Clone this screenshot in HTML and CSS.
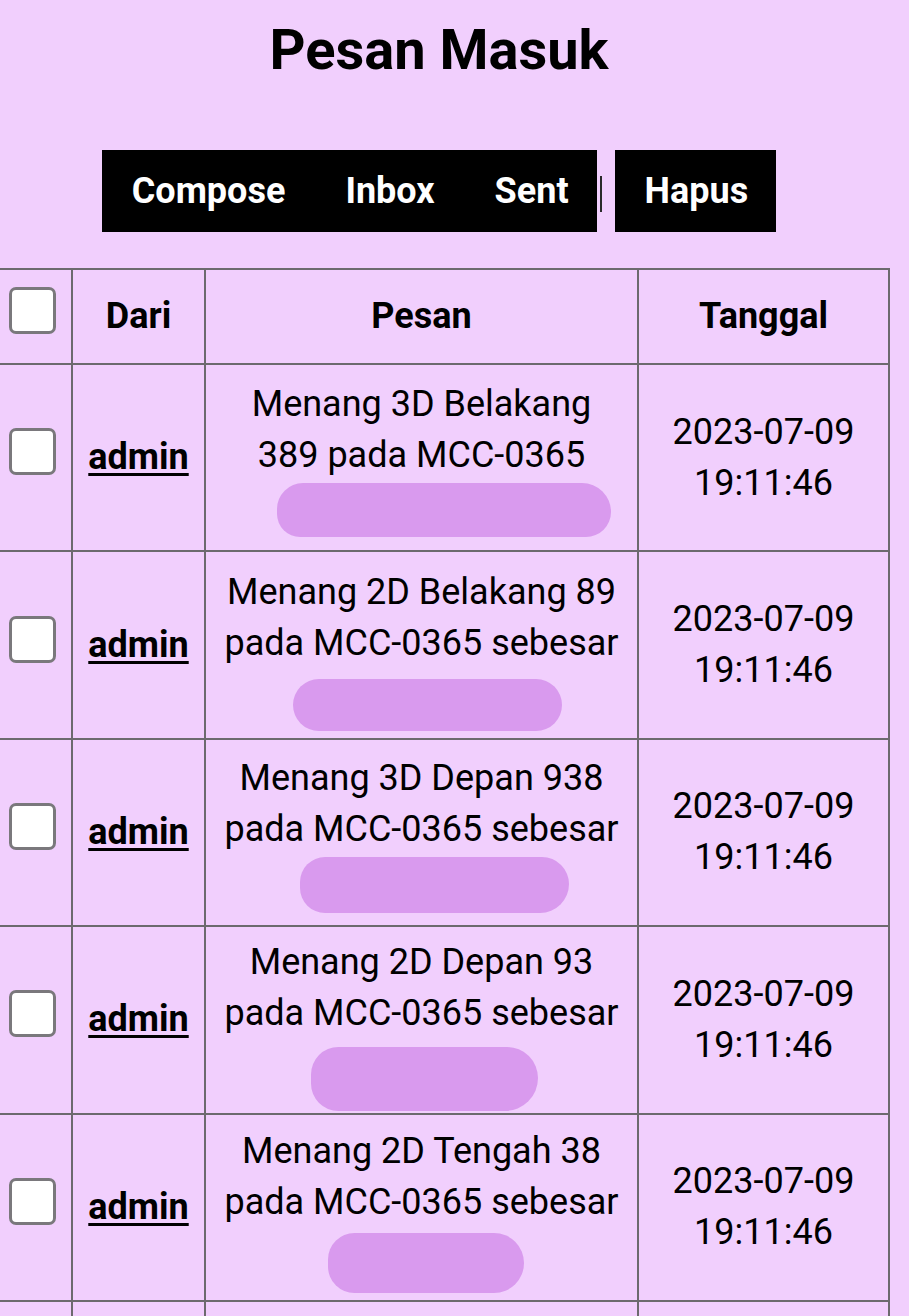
FILE: index.html
```html
<!DOCTYPE html>
<html lang="id">
<head>
<meta charset="utf-8">
<title>Pesan Masuk</title>
<link rel="stylesheet" href="styles.css">
</head>
<body>
<div class="page">
  <h1 class="title">Pesan Masuk</h1>
  <nav class="nav">
    <div class="nav-box">
      <a class="nav-link" href="#">Compose</a>
      <a class="nav-link" href="#">Inbox</a>
      <a class="nav-link" href="#">Sent</a>
    </div>
    <span class="nav-sep"></span>
    <div class="nav-box">
      <a class="nav-link" href="#">Hapus</a>
    </div>
  </nav>
</div>
<table class="inbox">
  <colgroup>
    <col class="c-check"><col class="c-from"><col class="c-msg"><col class="c-date">
  </colgroup>
  <thead>
    <tr>
      <th><span class="check"></span></th>
      <th>Dari</th>
      <th>Pesan</th>
      <th>Tanggal</th>
    </tr>
  </thead>
  <tbody>
    <tr>
      <td><span class="check"></span></td>
      <td><a class="from" href="#">admin</a></td>
      <td class="msg">Menang 3D Belakang<br>389 pada MCC-0365<br><span class="blob b1"></span></td>
      <td class="date">2023-07-09<br>19:11:46</td>
    </tr>
    <tr>
      <td><span class="check"></span></td>
      <td><a class="from" href="#">admin</a></td>
      <td class="msg">Menang 2D Belakang 89<br>pada MCC-0365 sebesar<br><span class="blob b2"></span></td>
      <td class="date">2023-07-09<br>19:11:46</td>
    </tr>
    <tr>
      <td><span class="check"></span></td>
      <td><a class="from" href="#">admin</a></td>
      <td class="msg">Menang 3D Depan 938<br>pada MCC-0365 sebesar<br><span class="blob b3"></span></td>
      <td class="date">2023-07-09<br>19:11:46</td>
    </tr>
    <tr>
      <td><span class="check"></span></td>
      <td><a class="from" href="#">admin</a></td>
      <td class="msg">Menang 2D Depan 93<br>pada MCC-0365 sebesar<br><span class="blob b4"></span></td>
      <td class="date">2023-07-09<br>19:11:46</td>
    </tr>
    <tr>
      <td><span class="check"></span></td>
      <td><a class="from" href="#">admin</a></td>
      <td class="msg">Menang 2D Tengah 38<br>pada MCC-0365 sebesar<br><span class="blob b5"></span></td>
      <td class="date">2023-07-09<br>19:11:46</td>
    </tr>
    <tr>
      <td class="empty"></td>
      <td class="empty"></td>
      <td class="empty"></td>
      <td class="empty"></td>
    </tr>
  </tbody>
</table>
</body>
</html>
```
FILE: styles.css
```css
html, body {
  margin: 0;
  padding: 0;
  background: #f1cffd;
}
body {
  font-family: Roboto, "Liberation Sans", sans-serif;
  color: #000;
  overflow: hidden;
}
.page {
  width: 878px;
}
.title {
  margin: 17px 0 0;
  font-size: 56px;
  line-height: 66px;
  font-weight: 700;
  text-align: center;
}
.nav {
  margin-top: 67px;
  display: flex;
  justify-content: center;
  align-items: center;
}
.nav-box {
  background: #000;
  display: flex;
  height: 82px;
  align-items: center;
}
.nav-link {
  color: #fff;
  text-decoration: none;
  font-weight: 700;
  font-size: 36px;
  padding: 0 30px;
}
.nav-link:last-child {
  padding-right: 28px;
}
.nav-sep {
  display: block;
  width: 2px;
  height: 36px;
  background: #2a2a2a;
  margin: 6px 13px 0 3px;
}
.inbox {
  margin-top: 36px;
  margin-left: -3px;
  width: 891px;
  table-layout: fixed;
  border-collapse: collapse;
  font-size: 36px;
  line-height: 51px;
}
.c-check { width: 74px; }
.c-from { width: 133px; }
.c-msg { width: 433px; }
.c-date { width: 251px; }
.inbox th, .inbox td {
  border: 2px solid #6c6a6e;
  padding: 0;
  text-align: center;
  vertical-align: middle;
}
.inbox th {
  height: 93px;
  font-weight: 700;
}
.inbox td {
  height: 185.4px;
}
.msg, .date {
  padding-top: 3px;
}
.check {
  display: block;
  width: 41px;
  height: 41px;
  border: 3px solid #7a787c;
  border-radius: 7px;
  background: #fff;
  margin: 0 0 12px 10px;
}
.from {
  color: #000;
  font-weight: 700;
  text-decoration: underline;
  text-decoration-thickness: 3px;
  text-underline-offset: 4px;
}
.blob {
  display: inline-block;
  background: #d99aee;
  vertical-align: middle;
  position: relative;
}
.b1 { width: 334px; height: 54px; border-radius: 27px 30px 26px 24px; left: 22px; top: 1px; }
.b2 { width: 269px; height: 52px; border-radius: 26px; left: 6px; top: 8px; }
.b3 { width: 269px; height: 56px; border-radius: 26px 28px 30px 26px; left: 13px; top: 2px; }
.b4 { width: 227px; height: 64px; border-radius: 30px 34px 36px 30px; left: 3px; top: 8px; }
.b5 { width: 196px; height: 60px; border-radius: 30px 34px 34px 30px; left: 4px; top: 5px; }
```
